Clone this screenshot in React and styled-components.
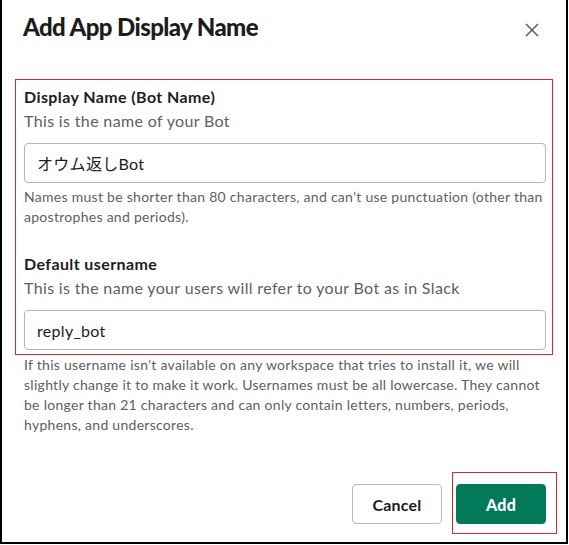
import React from 'react'
import styled, { createGlobalStyle } from 'styled-components'

const GlobalStyle = createGlobalStyle`
  html, body {
    margin: 0;
    padding: 0;
    background: #ffffff;
  }
  body {
    font-family: Lato, 'Noto Sans CJK JP', sans-serif;
    color: #1d1c1d;
  }
  * {
    box-sizing: border-box;
  }
`

const Frame = styled.div`
  width: 568px;
  height: 544px;
  border: 2px solid #000000;
  border-top: none;
  display: flex;
  flex-direction: column;
  background: #ffffff;
`

const Header = styled.div`
  height: 79px;
  display: flex;
  align-items: flex-start;
  justify-content: space-between;
  padding: 11px 24px 0 21px;
`

const Title = styled.h1`
  margin: 0;
  font-size: 24px;
  line-height: 32px;
  font-weight: 900;
  letter-spacing: -0.6px;
  color: #1d1c1d;
`

const CloseButton = styled.button`
  border: none;
  background: transparent;
  padding: 0;
  margin-top: 9px;
  width: 20px;
  height: 20px;
  display: flex;
  align-items: center;
  justify-content: center;
  color: #616061;
  cursor: pointer;
`

const Body = styled.div`
  padding: 0 0 0 13px;
  flex: 1;
`

const Highlight = styled.div`
  width: 538px;
  border: 1px solid #e0262f;
  padding: 6px 6px 4px 8px;
`

const Field = styled.div`
  display: flex;
  flex-direction: column;
  margin-top: ${p => p.$gap || 0}px;
`

const Label = styled.label`
  font-size: 16px;
  line-height: 22px;
  font-weight: 700;
  letter-spacing: 0.4px;
  color: #1d1c1d;
`

const SubText = styled.div`
  font-size: 16px;
  line-height: 26px;
  letter-spacing: 0.35px;
  color: #616061;
`

const Input = styled.input`
  margin-top: 9px;
  height: 40px;
  width: 100%;
  border: 1px solid #b5b5b5;
  border-radius: 4px;
  padding: 0 12px;
  font-family: Lato, 'Noto Sans CJK JP', sans-serif;
  font-size: 16px;
  letter-spacing: 0.3px;
  color: #1d1c1d;
  background: #ffffff;
  outline: none;
`

const Hint = styled.div`
  font-size: 14px;
  line-height: 20px;
  letter-spacing: 0.28px;
  color: #616061;
  margin-top: ${p => p.$gap || 0}px;
  padding-left: ${p => p.$indent || 0}px;
  padding-right: ${p => p.$right || 0}px;
`

const Footer = styled.div`
  display: flex;
  justify-content: flex-end;
  align-items: flex-start;
  gap: 10px;
  padding: 0 9px 8px 0;
`

const Button = styled.button`
  width: 90px;
  height: 40px;
  border-radius: 4px;
  font-family: Lato, sans-serif;
  font-size: 16px;
  font-weight: ${p => (p.$primary ? 900 : 700)};
  letter-spacing: 0.2px;
  cursor: pointer;
  border: 1px solid ${p => (p.$primary ? '#007a5a' : '#bbbbbb')};
  background: ${p => (p.$primary ? '#007a5a' : '#ffffff')};
  color: ${p => (p.$primary ? '#ffffff' : '#1d1c1d')};
  margin-top: ${p => p.$offset || 0}px;
`

const ButtonMark = styled.div`
  border: 1px solid #e0262f;
  padding: 11px 10px 9px 3px;
`

export default function App() {
  return (
    <>
      <GlobalStyle />
      <Frame>
        <Header>
          <Title>Add App Display Name</Title>
          <CloseButton aria-label="Close">
            <svg width="14" height="14" viewBox="0 0 14 14">
              <path d="M1 1 L13 13 M13 1 L1 13" stroke="currentColor" strokeWidth="1.6" fill="none" />
            </svg>
          </CloseButton>
        </Header>
        <Body>
          <Highlight>
            <Field>
              <Label>Display Name (Bot Name)</Label>
              <SubText>This is the name of your Bot</SubText>
              <Input defaultValue="オウム返しBot" />
              <Hint $gap={4}>
                Names must be shorter than 80 characters, and can’t use punctuation (other than
                apostrophes and periods).
              </Hint>
            </Field>
            <Field $gap={26}>
              <Label>Default username</Label>
              <SubText>This is the name your users will refer to your Bot as in Slack</SubText>
              <Input defaultValue="reply_bot" />
            </Field>
          </Highlight>
          <Hint $indent={9} $right={20}>
            If this username isn’t available on any workspace that tries to install it, we will
            slightly change it to make it work. Usernames must be all lowercase. They cannot be
            longer than 21 characters and can only contain letters, numbers, periods, hyphens, and
            underscores.
          </Hint>
        </Body>
        <Footer>
          <Button $offset={12}>Cancel</Button>
          <ButtonMark>
            <Button $primary>Add</Button>
          </ButtonMark>
        </Footer>
      </Frame>
    </>
  )
}
